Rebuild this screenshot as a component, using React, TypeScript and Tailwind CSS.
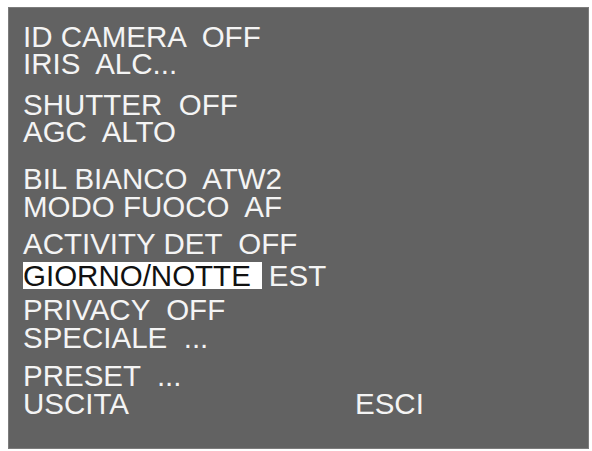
const rows: { label: string; value?: string; mt: string; selected?: boolean }[] = [
  { label: "ID CAMERA  OFF", mt: "mt-[15px]" },
  { label: "IRIS  ALC...", mt: "mt-0" },
  { label: "SHUTTER  OFF", mt: "mt-[14px]" },
  { label: "AGC  ALTO", mt: "mt-0" },
  { label: "BIL BIANCO  ATW2", mt: "mt-[20px]" },
  { label: "MODO FUOCO  AF", mt: "mt-[1px]" },
  { label: "ACTIVITY DET  OFF", mt: "mt-[10px]" },
  { label: "GIORNO/NOTTE", value: "EST", mt: "mt-[5px]", selected: true },
  { label: "PRIVACY  OFF", mt: "mt-[7px]" },
  { label: "SPECIALE  ...", mt: "mt-[1px]" },
  { label: "PRESET  ...", mt: "mt-[11px]" },
];

export default function App() {
  return (
    <div className="h-[451px] w-[592px] bg-white pl-[8px] pt-[7px]">
      <div
        className="h-[442px] w-[581px] border border-[#7c7c7c] bg-[#626262] pl-[14px] text-[29.5px] leading-[27px] text-[#f4f4f4]"
        style={{ fontFamily: '"Liberation Sans", Arial, sans-serif' }}
      >
        {rows.map((r) => (
          <div key={r.label} className={`${r.mt} flex whitespace-pre`}>
            {r.selected ? (
              <>
                <span className="bg-white pr-[11px] text-[#111111]">{r.label}</span>
                <span className="pl-[7px]">{r.value}</span>
              </>
            ) : (
              <span>{r.label}</span>
            )}
          </div>
        ))}
        <div className="mt-[1px] flex whitespace-pre">
          <span className="w-[332px]">USCITA</span>
          <span>ESCI</span>
        </div>
      </div>
    </div>
  );
}
